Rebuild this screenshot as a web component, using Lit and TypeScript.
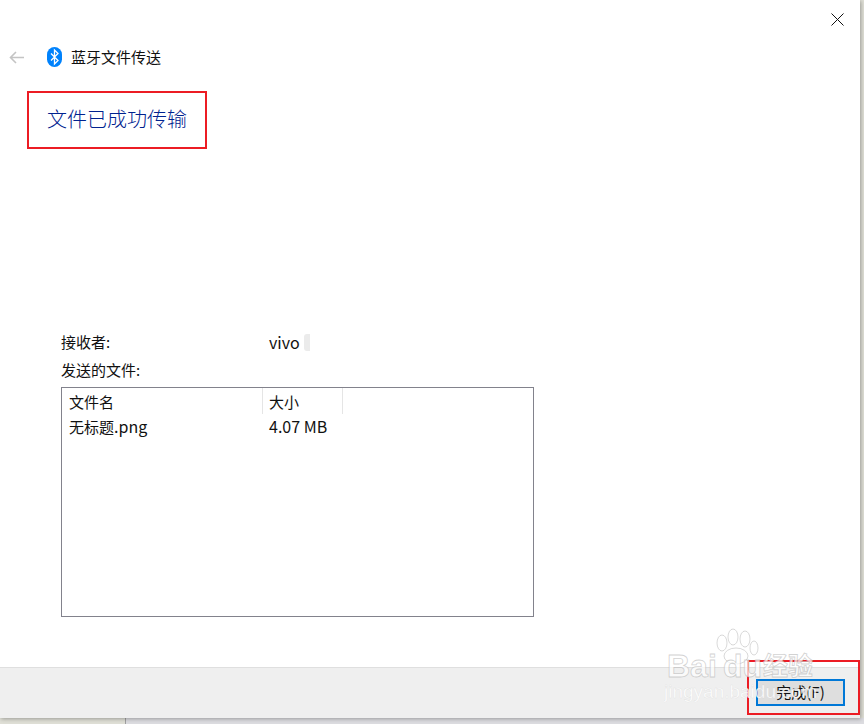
import { LitElement, html, css } from "lit";
import { customElement } from "lit/decorators.js";

@customElement("app-root")
export class AppRoot extends LitElement {
  static styles = css`
    :host {
      display: block;
      width: 864px;
      height: 724px;
      overflow: hidden;
      position: relative;
      background: #dfdfd6;
      font-family: "Noto Sans CJK SC", sans-serif;
      color: #111;
    }
    .window {
      width: 860px;
      height: 718px;
      background: #fff;
      display: flex;
      flex-direction: column;
      box-shadow: 1px 1px 4px rgba(0, 0, 0, 0.3);
      position: relative;
      z-index: 1;
    }
    .close {
      display: flex;
      justify-content: flex-end;
      padding: 13px 16px 0 0;
      height: 13px;
    }
    .nav {
      display: flex;
      align-items: center;
      margin-top: 21px;
      height: 20px;
      padding-left: 9px;
      font-size: 15px;
      line-height: 20px;
    }
    .arrow {
      margin-right: 23px;
    }
    .bt {
      margin-right: 9px;
    }
    .headline-box {
      box-sizing: border-box;
      width: 180px;
      height: 58px;
      margin: 24px 0 0 27px;
      border: 2px solid #ec1c24;
      display: flex;
      align-items: center;
      padding: 0 0 3px 18px;
      color: #00228f;
      font-size: 20px;
      font-weight: 300;
    }
    .body {
      flex: 1;
      padding: 183px 0 0 61px;
      font-size: 15px;
    }
    .row {
      display: flex;
      height: 20px;
      line-height: 20px;
    }
    .row .k {
      width: 208px;
    }
    .v {
      display: flex;
      align-items: center;
      gap: 4px;
      font-size: 16px;
    }
    .latin {
      font-size: 16px;
    }
    .smudge {
      width: 6px;
      height: 17px;
      background: #ebebeb;
      border-radius: 3px 0 0 3px;
    }
    .label {
      margin-top: 8px;
    }
    .list {
      box-sizing: border-box;
      width: 473px;
      height: 230px;
      margin-top: 7px;
      border: 1px solid #82828c;
    }
    .cols {
      display: grid;
      grid-template-columns: 201px 80px;
    }
    .cols.head {
      height: 26px;
    }
    .cols.files {
      height: 24px;
    }
    .cols > div {
      padding-left: 7px;
      display: flex;
      align-items: center;
    }
    .cols > div + div {
      padding-left: 6px;
    }
    .cols.head > div {
      border-right: 1px solid #e5e5e5;
    }
    .footer {
      box-sizing: border-box;
      height: 51px;
      flex: none;
      background: #efefef;
      border-top: 1px solid #dfdfdf;
      position: relative;
    }
    .callout {
      box-sizing: border-box;
      position: absolute;
      right: 0;
      bottom: 3px;
      width: 113px;
      height: 55px;
      border: 2px solid #ec1c24;
      display: flex;
      align-items: flex-end;
      padding: 0 0 7px 7px;
    }
    button {
      box-sizing: border-box;
      width: 89px;
      height: 27px;
      background: #dedede;
      border: 2px solid #0078d7;
      font: inherit;
      font-size: 15px;
      line-height: 1;
      color: #111;
      padding: 0 0 2px;
    }
    .taskbar {
      position: absolute;
      left: 125px;
      right: 0;
      top: 718px;
      height: 6px;
      background: #dcdce0;
      border-left: 1px solid #a0a0a0;
    }
    .mark {
      position: absolute;
      left: 664px;
      top: 628px;
      pointer-events: none;
      z-index: 2;
    }
    .mark-t {
      fill: rgba(255, 255, 255, 0.72);
      stroke: rgba(165, 165, 165, 0.5);
      stroke-width: 0.8;
      font-family: "Liberation Sans", sans-serif;
      font-weight: 700;
    }
    .mark-c {
      font-family: "Noto Sans CJK SC", sans-serif;
    }
    .mark-s {
      fill: rgba(255, 255, 255, 0.85);
      stroke: rgba(175, 175, 175, 0.3);
      stroke-width: 0.4;
      font-family: "Liberation Sans", sans-serif;
    }
    .paw {
      fill: rgba(255, 255, 255, 0.75);
      stroke: rgba(170, 170, 170, 0.45);
    }
  `;

  render() {
    return html`
      <div class="window">
        <div class="close">
          <svg width="13" height="13" viewBox="0 0 13 13">
            <path d="M.5.5l12 12M12.5.5l-12 12" stroke="#111" fill="none" />
          </svg>
        </div>
        <div class="nav">
          <svg class="arrow" width="15" height="13" viewBox="0 0 15 13">
            <path d="M15 6.5H1.5M7 1L1.5 6.5 7 12" stroke="#c4c4c4" stroke-width="1.6" fill="none" />
          </svg>
          <svg class="bt" width="15" height="20" viewBox="0 0 15 20">
            <rect x="0" y="0" width="15" height="20" rx="7.5" fill="#0082fc" />
            <path d="M4 6.5l7 7-3.5 3.5v-14l3.5 3.5-7 7" stroke="#fff" stroke-width="1.3" fill="none" />
          </svg>
          <span>蓝牙文件传送</span>
        </div>
        <div class="headline-box">文件已成功传输</div>
        <div class="body">
          <div class="row">
            <div class="k">接收者:</div>
            <div class="v">vivo <span class="smudge"></span></div>
          </div>
          <div class="row label">发送的文件:</div>
          <div class="list">
            <div class="cols head">
              <div>文件名</div>
              <div>大小</div>
            </div>
            <div class="cols files">
              <div><span>无标题<span class="latin">.png</span></span></div>
              <div class="latin">4.07 MB</div>
            </div>
          </div>
        </div>
        <div class="footer">
          <div class="callout"><button>完成(F)</button></div>
        </div>
      </div>
      <div class="taskbar"></div>
      <svg class="mark" width="180" height="80" viewBox="0 0 180 80">
        <g class="paw" stroke-width="1">
          <ellipse cx="58" cy="15" rx="5" ry="8" />
          <ellipse cx="69" cy="9" rx="5" ry="8" />
          <ellipse cx="81" cy="11" rx="5" ry="8" />
          <ellipse cx="90" cy="20" rx="4" ry="7" />
          <ellipse cx="72" cy="28" rx="12" ry="8" />
        </g>
        <text class="mark-t" x="3" y="49" font-size="32">Bai</text>
        <text class="mark-t" x="59" y="49" font-size="32">du</text>
        <text class="mark-t mark-c" x="99" y="47" font-size="25">经验</text>
        <text class="mark-s" x="0" y="70" font-size="19">jingyan.baidu.com</text>
      </svg>
    `;
  }
}
